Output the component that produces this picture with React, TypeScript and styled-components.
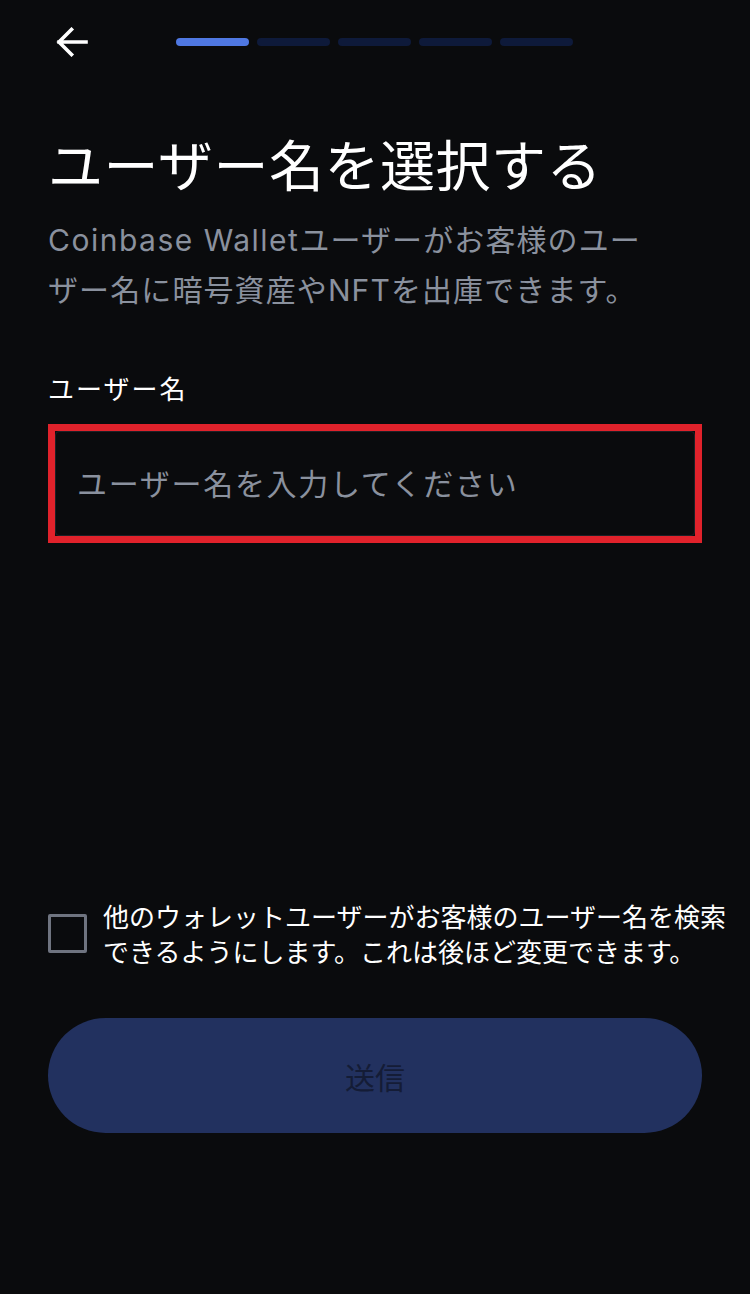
import React from "react";
import styled, { createGlobalStyle } from "styled-components";

const GlobalStyle = createGlobalStyle`
  html, body {
    margin: 0;
    padding: 0;
    background: #0a0b0d;
  }
  body {
    font-family: Inter, "Noto Sans CJK JP", sans-serif;
    color: #ffffff;
  }
`;

const STEPS = 5;
const CURRENT_STEP = 0;

const App: React.FC = () => {
  return (
    <>
      <GlobalStyle />
      <Page>
        <Header>
          <BackButton aria-label="back">
            <svg width="32" height="30" viewBox="0 0 32 30" fill="none">
              <path
                d="M30 15H3M15.5 2.5L3 15l12.5 12.5"
                stroke="#ffffff"
                strokeWidth="3.6"
                strokeLinecap="square"
              />
            </svg>
          </BackButton>
          <Progress>
            {Array.from({ length: STEPS }).map((_, i) => (
              <Segment key={i} active={i === CURRENT_STEP} />
            ))}
          </Progress>
        </Header>

        <Title>ユーザー名を選択する</Title>
        <Subtitle>
          <Brand>Coinbase Wallet</Brand>ユーザーがお客様のユーザー名に暗号資産やNFTを出庫できます。
        </Subtitle>

        <FieldLabel>ユーザー名</FieldLabel>
        <InputFrame>
          <Input placeholder="ユーザー名を入力してください" />
        </InputFrame>

        <Spacer />

        <ConsentRow>
          <Checkbox type="checkbox" />
          <ConsentText>
            他のウォレットユーザーがお客様のユーザー名を検索
            <br />
            できるようにします。これは後ほど変更できます。
          </ConsentText>
        </ConsentRow>

        <SubmitButton disabled>送信</SubmitButton>
      </Page>
    </>
  );
};

export default App;

const Page = styled.div`
  box-sizing: border-box;
  height: 1294px;
  padding: 0 48px 161px;
  display: flex;
  flex-direction: column;
`;

const Header = styled.div`
  height: 84px;
  display: flex;
  align-items: center;
  padding-left: 8px;
`;

const BackButton = styled.button`
  background: none;
  border: none;
  padding: 0;
  width: 32px;
  height: 30px;
  display: flex;
  cursor: pointer;
`;

const Progress = styled.div`
  margin-left: 88px;
  display: flex;
  gap: 8px;
`;

const Segment = styled.div<{ active: boolean }>`
  width: 73px;
  height: 8px;
  border-radius: 4px;
  background: ${(p) => (p.active ? "#4f78e2" : "#0e1a3a")};
`;

const Title = styled.h1`
  margin: 44px 0 0;
  font-family: "Noto Sans CJK JP", sans-serif;
  font-size: 55px;
  font-weight: 400;
  line-height: 68px;
  letter-spacing: 0.5px;
  color: #ffffff;
`;

const Subtitle = styled.p`
  margin: 19px 0 0;
  max-width: 610px;
  font-size: 30px;
  line-height: 50px;
  letter-spacing: 1.1px;
  color: #8a919e;
`;

const Brand = styled.span`
  letter-spacing: 1.5px;
`;

const FieldLabel = styled.div`
  margin-top: 55px;
  font-family: "Noto Sans CJK JP", sans-serif;
  font-size: 26px;
  line-height: 36px;
  letter-spacing: 2px;
  color: #ffffff;
`;

const InputFrame = styled.div`
  margin-top: 18px;
  height: 119px;
  box-sizing: border-box;
  border: 7px solid #e0222b;
  display: flex;
`;

const Input = styled.input`
  flex: 1;
  min-width: 0;
  background: #0a0b0d;
  border: 1px solid #1d2026;
  border-radius: 4px;
  outline: none;
  padding: 0 0 4px 21px;
  font-family: "Noto Sans CJK JP", sans-serif;
  font-size: 30px;
  letter-spacing: 1.7px;
  color: #ffffff;

  &::placeholder {
    color: #8a919e;
  }
`;

const Spacer = styled.div`
  flex: 1;
`;

const ConsentRow = styled.label`
  display: flex;
  align-items: center;
  gap: 16px;
  margin-right: -36px;
`;

const Checkbox = styled.input`
  appearance: none;
  margin: 0;
  flex: none;
  width: 39px;
  height: 39px;
  box-sizing: border-box;
  border: 3px solid #6f7480;
  border-radius: 2px;
  background: transparent;
`;

const ConsentText = styled.span`
  font-family: "Noto Sans CJK JP", sans-serif;
  font-size: 26px;
  line-height: 35px;
  color: #ffffff;
`;

const SubmitButton = styled.button`
  margin-top: 50px;
  height: 115px;
  border: none;
  border-radius: 58px;
  background: #22315f;
  color: #141c36;
  font-family: "Noto Sans CJK JP", sans-serif;
  font-size: 30px;
  cursor: default;
`;
